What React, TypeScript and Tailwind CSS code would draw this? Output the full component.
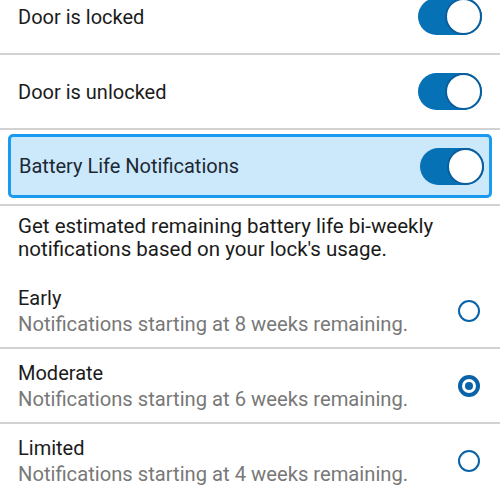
const options = [
  { label: 'Early', weeks: 8 },
  { label: 'Moderate', weeks: 6 },
  { label: 'Limited', weeks: 4 },
]

function Toggle() {
  return (
    <div className="flex h-[37px] w-[64px] shrink-0 justify-end rounded-full bg-[#0671b4]">
      <div className="h-[37px] w-[37px] rounded-full border-2 border-[#0a5e9e] bg-white" />
    </div>
  )
}

function Radio({ checked }: { checked: boolean }) {
  if (checked) {
    return (
      <div className="flex h-[22px] w-[22px] items-center justify-center rounded-full bg-[#0a63a8]">
        <div className="flex h-[14px] w-[14px] items-center justify-center rounded-full bg-white">
          <div className="h-[8px] w-[8px] rounded-full bg-[#0a63a8]" />
        </div>
      </div>
    )
  }
  return <div className="h-[22px] w-[22px] rounded-full border-2 border-[#0a63a8]" />
}

export default function App() {
  const selected = 'Moderate'
  return (
    <div
      className="-mt-[20px] h-[520px] w-[500px] overflow-hidden bg-white"
      style={{ fontFamily: 'Roboto, "Noto Sans", sans-serif' }}
    >
      <div className="flex h-[73px] items-center justify-between pl-[18px] pr-[18px] text-[20px] text-[#1b1b1b]">
        <span>Door is locked</span>
        <Toggle />
      </div>
      <div className="h-[2px] bg-[#d2d2d2]" />
      <div className="flex h-[73px] items-center justify-between pl-[18px] pr-[18px] text-[20px] text-[#1b1b1b]">
        <span>Door is unlocked</span>
        <Toggle />
      </div>
      <div className="h-[2px] bg-[#d2d2d2]" />
      <div className="flex h-[74px] px-[8px] pt-[4px] pb-[6px]">
        <div className="flex flex-1 items-center justify-between rounded-[5px] border-[3px] border-[#1a9bf0] bg-[#cce9fb] pl-[8px] pr-[5px] text-[20px] text-[#1c2834]">
          <span>Battery Life Notifications</span>
          <Toggle />
        </div>
      </div>
      <div className="h-[2px] bg-[#d2d2d2]" />
      <div className="h-[68px] px-[18px] pt-[9px] text-[20.5px] leading-[23px] text-[#1b1b1b]">
        Get estimated remaining battery life bi-weekly notifications based on your lock's usage.
      </div>
      {options.map((o, i) => (
        <div key={o.label}>
          {i > 0 && <div className="h-[2px] bg-[#d2d2d2]" />}
          <div className="flex h-[73px] items-center justify-between pl-[18px] pr-[20px]">
            <div className="flex flex-col">
              <span className="text-[20px] leading-[26px] text-[#1b1b1b]">{o.label}</span>
              <span className="text-[20.2px] leading-[26px] text-[#787878]">
                Notifications starting at {o.weeks} weeks remaining.
              </span>
            </div>
            <Radio checked={o.label === selected} />
          </div>
        </div>
      ))}
    </div>
  )
}
